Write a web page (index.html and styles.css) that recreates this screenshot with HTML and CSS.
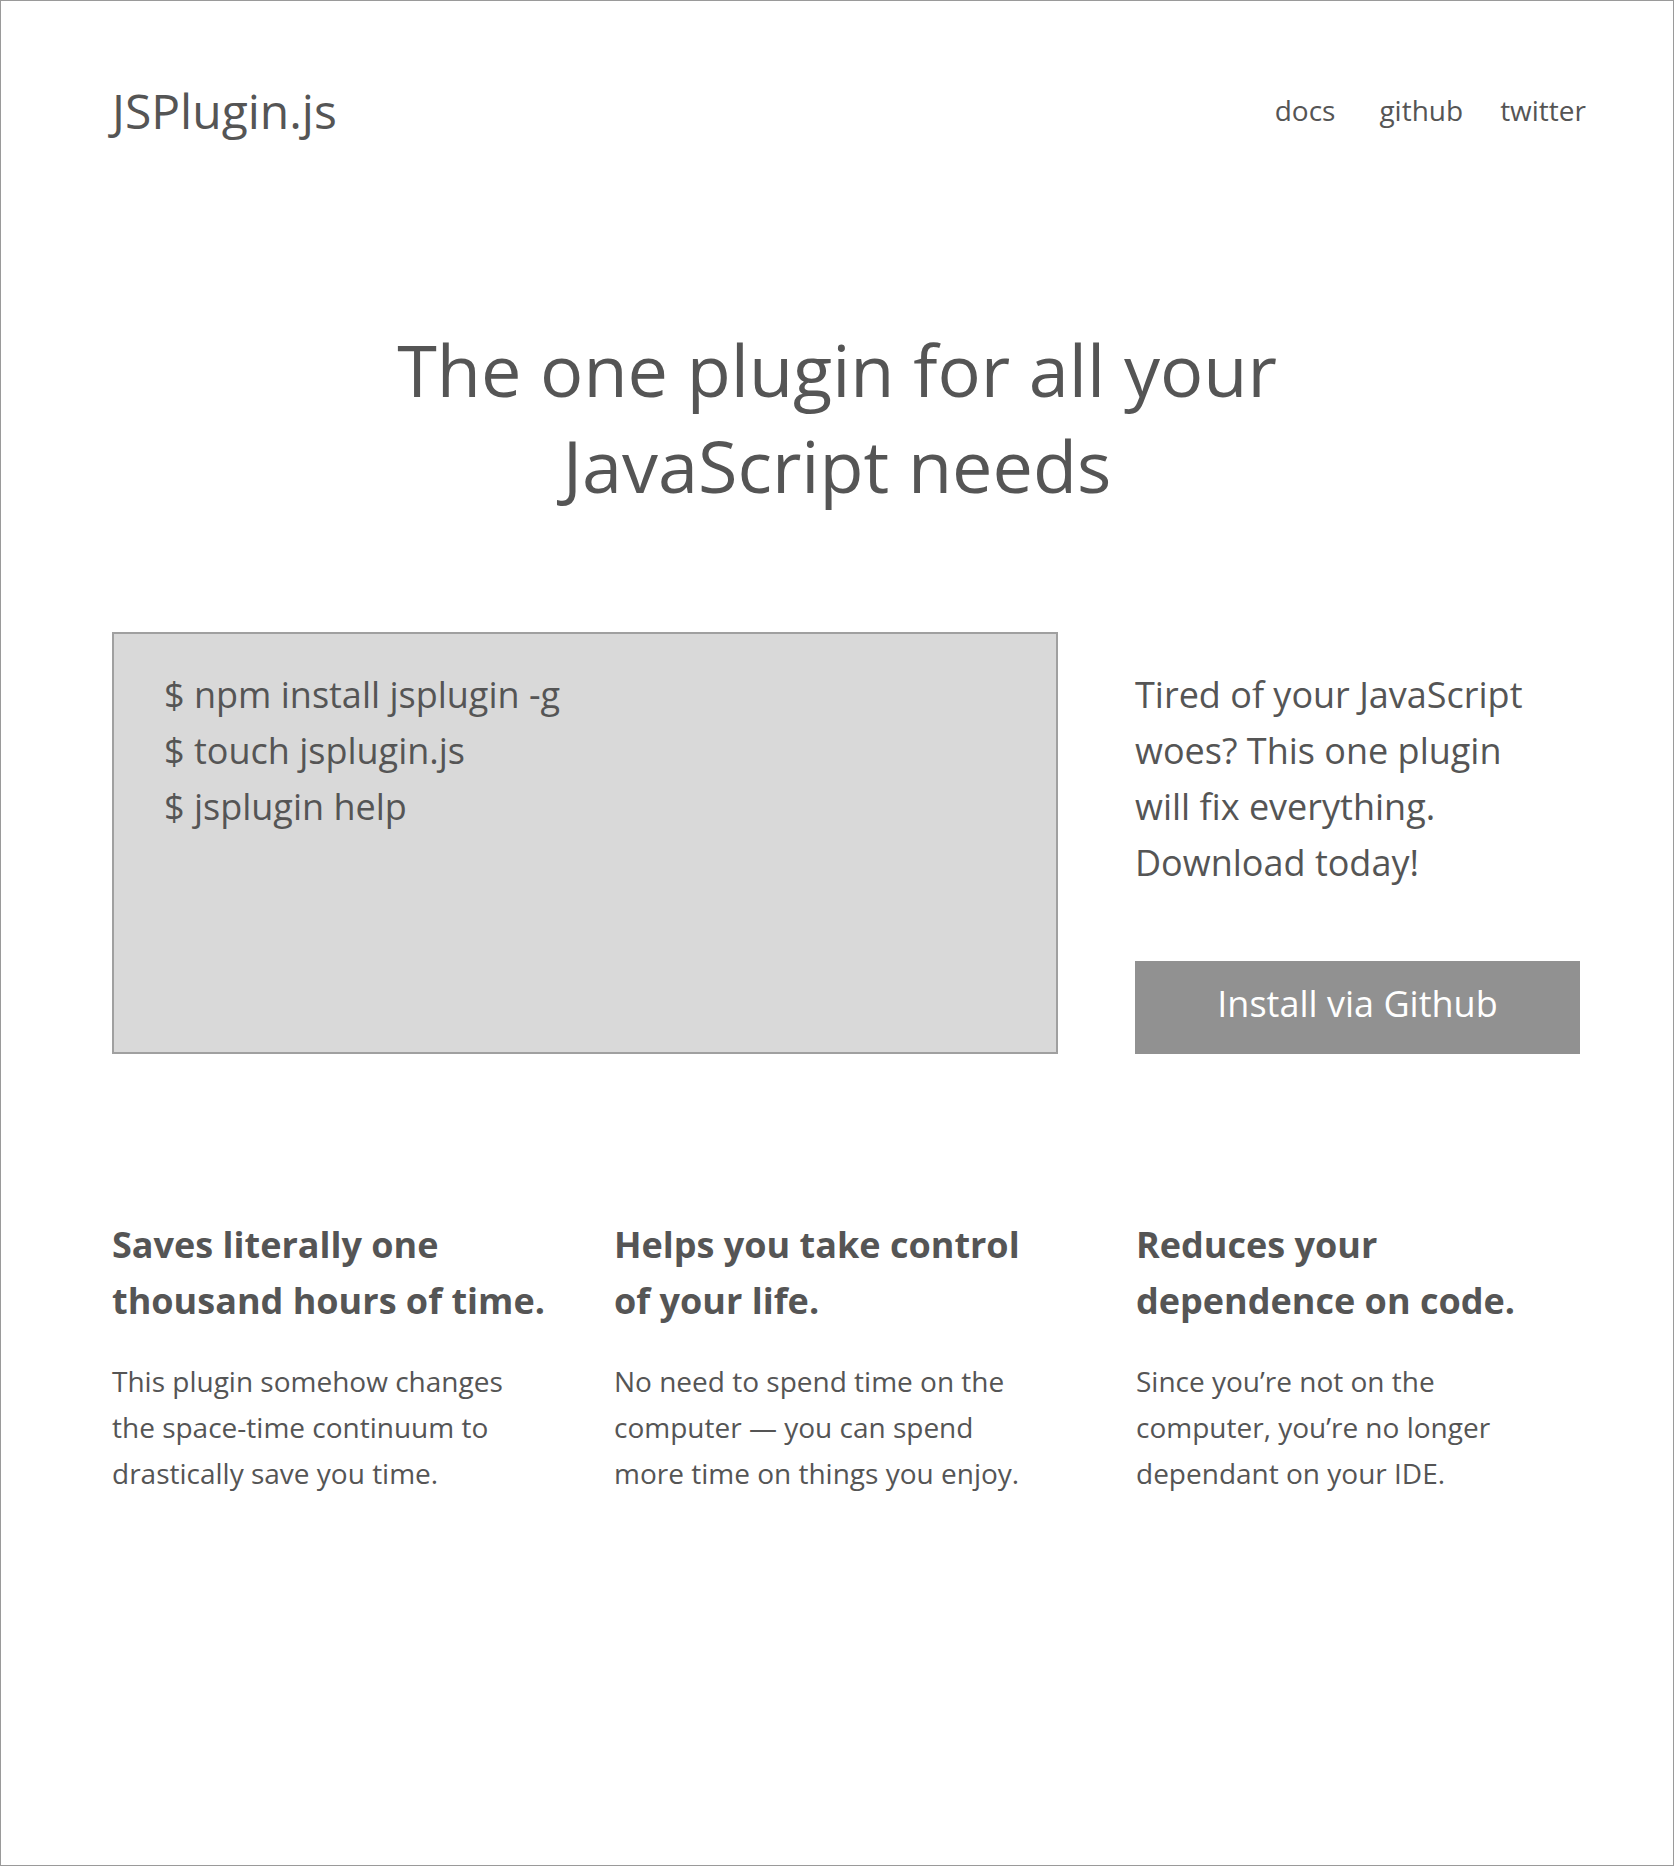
FILE: index.html
```html
<!DOCTYPE html>
<html lang="en">
<head>
<meta charset="utf-8">
<title>JSPlugin.js</title>
<link rel="stylesheet" href="styles.css">
</head>
<body>
<div class="page">
  <header class="header">
    <div class="logo">JSPlugin.js</div>
    <nav class="nav">
      <a class="nav-link" href="#">docs</a>
      <a class="nav-link" href="#">github</a>
      <a class="nav-link" href="#">twitter</a>
    </nav>
  </header>

  <div class="hero">
    <h1 class="hero-title">The one plugin for all your JavaScript needs</h1>
  </div>

  <section class="install">
    <div class="code">
      <div>$ npm install jsplugin -g</div>
      <div>$ touch jsplugin.js</div>
      <div>$ jsplugin help</div>
    </div>
    <div class="pitch">
      <p class="pitch-text">Tired of your JavaScript woes? This one plugin will fix everything. Download today!</p>
      <a class="button" href="#">Install via Github</a>
    </div>
  </section>

  <section class="features">
    <div class="feature f1">
      <h2>Saves literally one thousand hours of time.</h2>
      <p>This plugin somehow changes the space-time continuum to drastically save you time.</p>
    </div>
    <div class="feature f2">
      <h2>Helps you take control of your life.</h2>
      <p>No need to spend time on the computer — you can spend more time on things you enjoy.</p>
    </div>
    <div class="feature f3">
      <h2>Reduces your dependence on code.</h2>
      <p>Since you’re not on the computer, you’re no longer dependant on your IDE.</p>
    </div>
  </section>
</div>
</body>
</html>
```

FILE: styles.css
```css
html, body {
  margin: 0;
  padding: 0;
}
body {
  font-family: "Open Sans", "Noto Sans", sans-serif;
  color: #555;
  background: #fff;
}
.page {
  box-sizing: border-box;
  min-height: 1866px;
  border: 1px solid #9a9a9a;
  padding: 81px 93px 0 111px;
}
.header {
  display: flex;
  justify-content: space-between;
  align-items: center;
}
.logo {
  font-size: 48px;
  line-height: 1.2;
}
.nav {
  display: flex;
  margin-right: -6px;
}
.nav-link {
  font-size: 28px;
  line-height: 1.2;
  color: #555;
  text-decoration: none;
}
.nav-link + .nav-link {
  margin-left: 44px;
}
.nav-link:last-child {
  margin-left: 37px;
}
.hero {
  margin: 181px -93px 0 -111px;
}
.hero-title {
  margin: 0 auto;
  max-width: 1000px;
  font-size: 72px;
  line-height: 96px;
  font-weight: 400;
  text-align: center;
}
.install {
  display: flex;
  gap: 77px;
  margin-top: 119px;
}
.code {
  box-sizing: border-box;
  width: 946px;
  height: 422px;
  background: #d9d9d9;
  border: 2px solid #a0a0a0;
  padding: 33px 50px;
  font-size: 36px;
  line-height: 56px;
}
.pitch {
  flex: 1;
  display: flex;
  flex-direction: column;
  justify-content: space-between;
  padding-top: 35px;
}
.pitch-text {
  margin: 0;
  max-width: 410px;
  font-size: 36px;
  line-height: 56px;
}
.button {
  display: block;
  box-sizing: border-box;
  height: 93px;
  background: #919191;
  color: #fff;
  text-decoration: none;
  font-size: 36px;
  line-height: 85px;
  text-align: center;
}
.features {
  display: grid;
  grid-template-columns: 502px 522px 444px;
  margin-top: 163px;
}
.feature h2 {
  margin: 0 0 29px;
  font-size: 36px;
  line-height: 56px;
  font-weight: 700;
}
.feature p {
  margin: 0;
  font-size: 28px;
  line-height: 46px;
}
.f1 { max-width: 436px; }
.f2 { max-width: 412px; }
.f3 { max-width: 412px; }
```
